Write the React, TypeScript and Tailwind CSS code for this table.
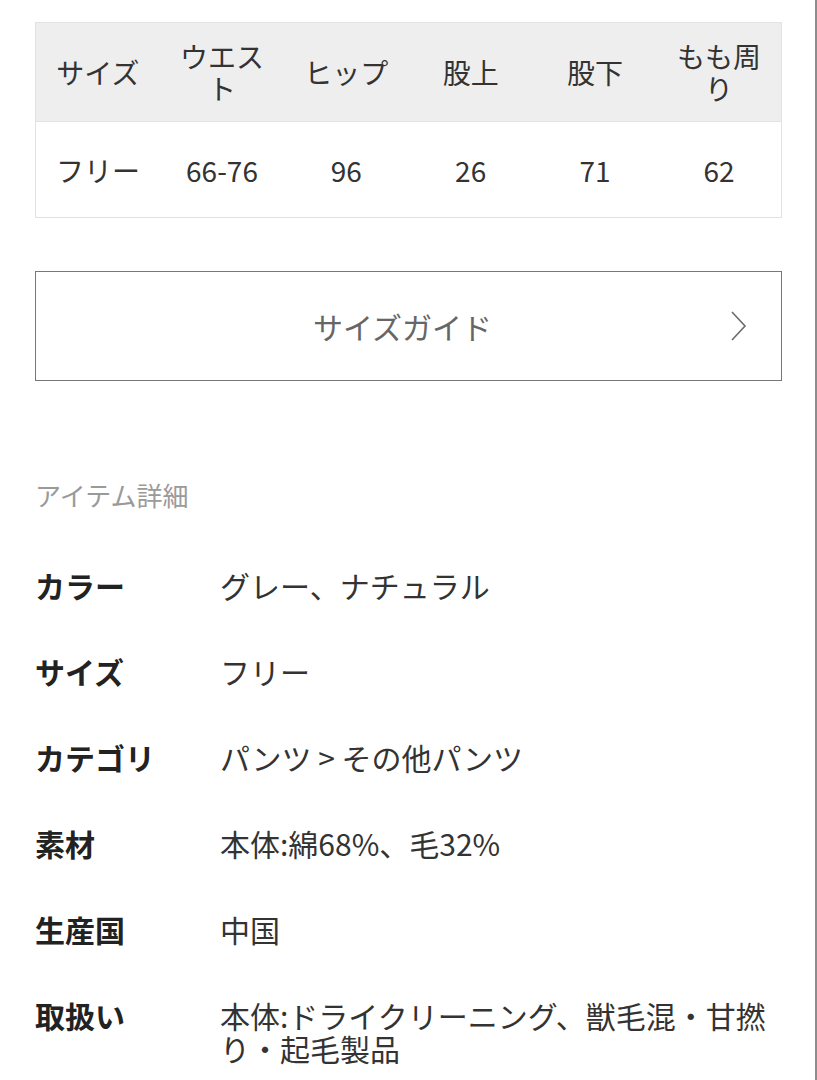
const headers = ["サイズ", "ウエスト", "ヒップ", "股上", "股下", "もも周り"];
const values = ["フリー", "66-76", "96", "26", "71", "62"];

const details: [string, string][] = [
  ["カラー", "グレー、ナチュラル"],
  ["サイズ", "フリー"],
  ["カテゴリ", "パンツ > その他パンツ"],
  ["素材", "本体:綿68%、毛32%"],
  ["生産国", "中国"],
  ["取扱い", "本体:ドライクリーニング、獣毛混・甘撚り・起毛製品"],
];

function ChevronRight() {
  return (
    <svg width="18" height="32" viewBox="0 0 18 32" fill="none" stroke="#6b6b6b" strokeWidth="1.6">
      <path d="M3 2 L16 16 L3 30" />
    </svg>
  );
}

export default function App() {
  return (
    <div
      className="flex min-h-[1080px] w-[817px] bg-white text-[#333]"
      style={{ fontFamily: '"Noto Sans CJK JP", "Roboto", sans-serif' }}
    >
      <div className="flex-1 pl-[35px] pr-[33px] pt-[22px]">
        {/* size table */}
        <div className="overflow-hidden">
          <table className="w-[747px] table-fixed border-collapse border border-[#e2e2e2] text-[28px] leading-[32px]">
            <thead>
              <tr className="h-[99px] bg-[#eeeeee]">
                {headers.map((h) => (
                  <th key={h} className="px-[16px] text-center align-middle font-normal">
                    {h}
                  </th>
                ))}
              </tr>
            </thead>
            <tbody>
              <tr className="h-[96px] border-t border-[#e2e2e2]">
                {values.map((v, i) => (
                  <td key={i} className="px-[12px] text-center align-middle">
                    {v}
                  </td>
                ))}
              </tr>
            </tbody>
          </table>
        </div>

        {/* size guide button */}
        <button className="mt-[53px] flex h-[110px] w-full items-center border border-[#777] pl-[40px] pr-[34px]">
          <span className="flex-1 text-center text-[30px] text-[#666]">サイズガイド</span>
          <ChevronRight />
        </button>

        {/* item details */}
        <h2 className="mt-[98px] text-[26px] leading-[32px] text-[#9a9a9a]">アイテム詳細</h2>

        <dl className="mt-[58px] flex flex-col gap-[53px] text-[30px] leading-[33px]">
          {details.map(([k, v]) => (
            <div key={k} className="flex">
              <dt className="w-[185px] shrink-0 font-bold text-[#222]">{k}</dt>
              <dd className="flex-1 text-[#333]">{v}</dd>
            </div>
          ))}
        </dl>
      </div>
      <div className="w-[2px] bg-[#8c8c8c]" />
    </div>
  );
}
